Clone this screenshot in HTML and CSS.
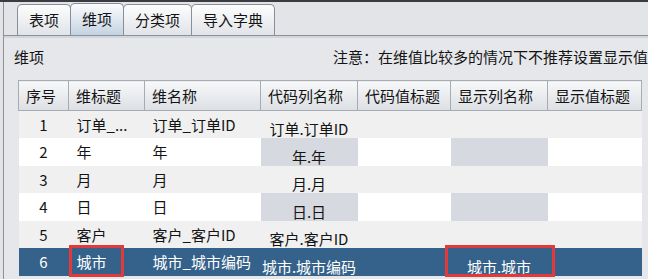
FILE: index.html
```html
<!DOCTYPE html>
<html lang="zh-CN">
<head>
    <meta charset="UTF-8">
    <title>维项</title>
    <link rel="stylesheet" href="styles.css">
</head>
<body>
    <div class="window">
        <div class="tabs">
            <div class="tab">表项</div>
            <div class="tab active">维项</div>
            <div class="tab">分类项</div>
            <div class="tab">导入字典</div>
        </div>
        <div class="panel">
            <div class="panel-head">
                <span class="title">维项</span>
                <span class="note">注意：在维值比较多的情况下不推荐设置显示值标题</span>
            </div>
            <table class="grid">
                <colgroup>
                    <col style="width:50px">
                    <col style="width:76px">
                    <col style="width:116px">
                    <col style="width:97px">
                    <col style="width:93px">
                    <col style="width:97px">
                    <col style="width:94px">
                </colgroup>
                <thead>
                    <tr>
                        <th>序号</th>
                        <th>维标题</th>
                        <th>维名称</th>
                        <th>代码列名称</th>
                        <th>代码值标题</th>
                        <th>显示列名称</th>
                        <th>显示值标题</th>
                    </tr>
                </thead>
                <tbody>
                    <tr>
                        <td class="num">1</td>
                        <td>订单_...</td>
                        <td>订单_订单ID</td>
                        <td class="code">订单.订单ID</td>
                        <td></td>
                        <td></td>
                        <td></td>
                    </tr>
                    <tr>
                        <td class="num">2</td>
                        <td>年</td>
                        <td>年</td>
                        <td class="code shade">年.年</td>
                        <td></td>
                        <td class="shade"></td>
                        <td></td>
                    </tr>
                    <tr>
                        <td class="num">3</td>
                        <td>月</td>
                        <td>月</td>
                        <td class="code">月.月</td>
                        <td></td>
                        <td></td>
                        <td></td>
                    </tr>
                    <tr>
                        <td class="num">4</td>
                        <td>日</td>
                        <td>日</td>
                        <td class="code shade">日.日</td>
                        <td></td>
                        <td class="shade"></td>
                        <td></td>
                    </tr>
                    <tr>
                        <td class="num">5</td>
                        <td>客户</td>
                        <td>客户_客户ID</td>
                        <td class="code">客户.客户ID</td>
                        <td></td>
                        <td></td>
                        <td></td>
                    </tr>
                    <tr class="selected">
                        <td class="num">6</td>
                        <td class="marked">城市<span class="mark mark-title"></span></td>
                        <td>城市_城市编码</td>
                        <td class="code">城市.城市编码</td>
                        <td></td>
                        <td class="code marked">城市.城市<span class="mark mark-show"></span></td>
                        <td></td>
                    </tr>
                </tbody>
            </table>
        </div>
    </div>
</body>
</html>
```

FILE: styles.css
```css
body {
    margin: 0;
    height: 277px;
    overflow: hidden;
    background-color: #e3e4e8;
    border-top: 2px solid #3a3c41;
    font-family: "Noto Sans CJK SC", "Liberation Sans", sans-serif;
    font-size: 15px;
    color: #141414;
}
.window {
    margin-left: 3px;
    height: 100%;
    border-left: 1px solid #8d9096;
}
.tabs {
    display: flex;
    align-items: flex-end;
    height: 33px;
    padding-left: 13px;
    border-bottom: 1px solid #8c9199;
}
.tab {
    box-sizing: border-box;
    height: 31px;
    padding: 0 11px;
    margin-right: -1px;
    border: 1px solid #8a8f97;
    border-bottom: none;
    border-radius: 5px 5px 0 0;
    background: linear-gradient(#fdfdfd, #e0e3e8);
    line-height: 30px;
    white-space: nowrap;
}
.tab.active {
    height: 32px;
    background: linear-gradient(#fbfcfd, #c3d3e2);
    position: relative;
}
.panel {
    border-top: 2px solid #d2d5da;
    padding-left: 10px;
    background-color: #e6e7eb;
    height: 100%;
}
.panel-head {
    display: flex;
    align-items: center;
    height: 38px;
    margin-bottom: 4px;
    white-space: nowrap;
    line-height: 20px;
}
.note {
    margin-left: 289px;
}
.grid {
    margin-left: 4px;
    width: 623px;
    table-layout: fixed;
    border-collapse: collapse;
}
.grid th {
    box-sizing: border-box;
    height: 30px;
    padding: 0 7px;
    border: 1px solid #a7abb2;
    background: linear-gradient(#f7f8f9, #dcdfe4);
    font-weight: normal;
    text-align: left;
    white-space: nowrap;
    overflow: hidden;
    line-height: 20px;
}
.grid tbody tr {
    height: 27px;
}
.grid tbody tr:nth-child(even) {
    height: 28px;
}
.grid td {
    padding: 0 8px;
    white-space: nowrap;
    line-height: 18px;
}
.grid tbody tr:nth-child(odd) td {
    background-color: #f0f0f0;
}
.grid tbody tr:nth-child(even) td {
    background-color: #ffffff;
}
.grid tbody tr:nth-child(even) td.shade {
    background-color: #d6d9df;
}
.grid tbody tr.selected td {
    background-color: #35628a;
    color: #ffffff;
}
.grid td.num {
    text-align: center;
}
.grid td.code {
    text-align: center;
    padding: 9px 0 0;
}
.marked {
    position: relative;
}
.mark {
    position: absolute;
    border: 3px solid #e23a3a;
    box-sizing: border-box;
}
.mark-title {
    left: 0;
    top: -3px;
    width: 55px;
    height: 32px;
}
.mark-show {
    left: -6px;
    top: -3px;
    width: 110px;
    height: 32px;
}
```
